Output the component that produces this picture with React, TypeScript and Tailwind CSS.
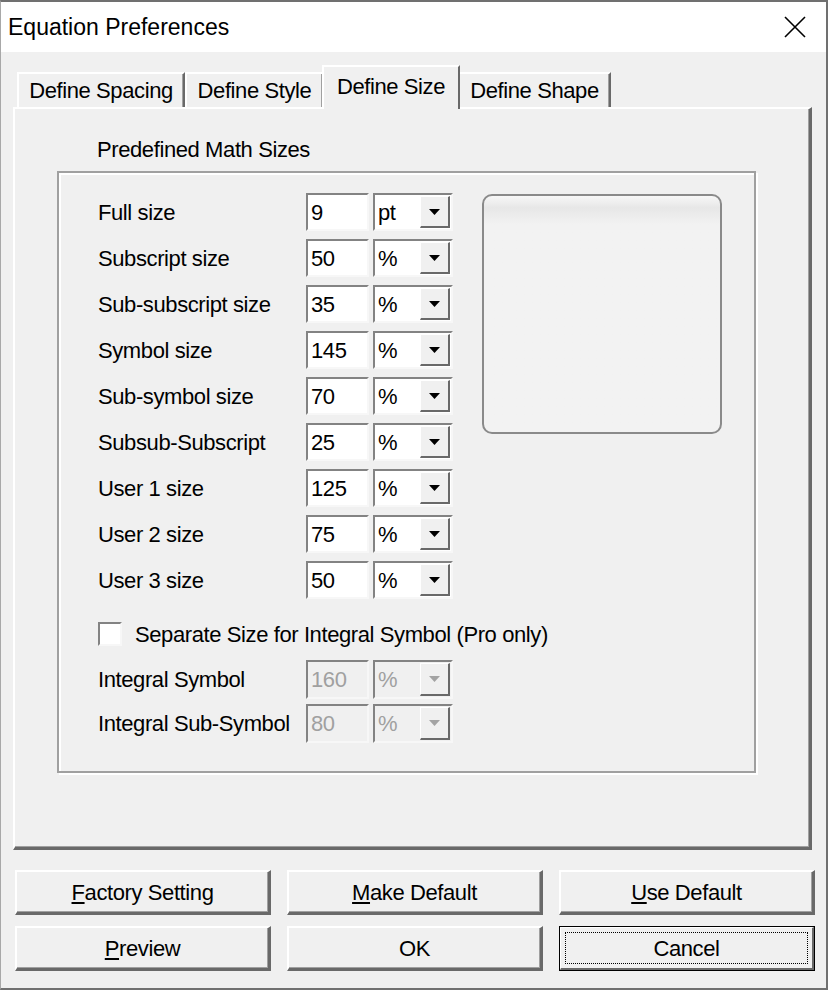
import React from 'react';

const FONT = "font-['Liberation_Sans',Arial,sans-serif]";
const SUNKEN = 'border-2 border-t-[#838383] border-l-[#838383] border-b-[#f7f7f7] border-r-[#f7f7f7]';

const sizes = [
  { label: 'Full size', value: '9', unit: 'pt' },
  { label: 'Subscript size', value: '50', unit: '%' },
  { label: 'Sub-subscript size', value: '35', unit: '%' },
  { label: 'Symbol size', value: '145', unit: '%' },
  { label: 'Sub-symbol size', value: '70', unit: '%' },
  { label: 'Subsub-Subscript', value: '25', unit: '%' },
  { label: 'User 1 size', value: '125', unit: '%' },
  { label: 'User 2 size', value: '75', unit: '%' },
  { label: 'User 3 size', value: '50', unit: '%' },
];

function Arrow({ disabled }: { disabled?: boolean }) {
  return (
    <svg width="11" height="6" viewBox="0 0 11 6">
      <path d="M0 0h11L5.5 6z" fill={disabled ? '#a3a3a3' : '#000'} />
    </svg>
  );
}

function SizeRow({ label, value, unit, disabled, tall }: { label: string; value: string; unit: string; disabled?: boolean; tall?: boolean }) {
  const fill = disabled ? 'bg-[#f0f0f0] text-[#a0a0a0]' : 'bg-white text-black';
  return (
    <div className={`flex items-center ${tall ? 'h-[39px]' : 'h-[38px]'}`}>
      <span className="w-[208px] shrink-0 whitespace-nowrap">{label}</span>
      <div className={`flex h-full w-[63px] shrink-0 items-center pl-[3px] ${SUNKEN} ${fill}`}>{value}</div>
      <div className={`ml-[4px] flex h-full w-[80px] shrink-0 ${SUNKEN} ${fill}`}>
        <span className="flex flex-1 items-center pl-[3px]">{unit}</span>
        <div className="my-[1px] mr-[1px] flex w-[30px] shrink-0 items-center justify-center border-t border-l border-t-white border-l-white border-b-2 border-r-2 border-b-[#696969] border-r-[#696969] bg-[#f0f0f0]">
          <Arrow disabled={disabled} />
        </div>
      </div>
    </div>
  );
}

function Tab({ label, width, selected }: { label: string; width: string; selected?: boolean }) {
  if (selected) {
    return (
      <div className={`relative z-10 -mx-[2px] -mb-[2px] flex h-[44px] items-center justify-center whitespace-nowrap pb-[4px] ${width} border-t-2 border-l-2 border-r-2 border-t-white border-l-white border-r-[#696969] bg-[#f0f0f0]`}>
        {label}
      </div>
    );
  }
  return (
    <div className={`flex h-[35px] items-center justify-center whitespace-nowrap ${width} border-t-2 border-l-2 border-r-2 border-t-white border-l-white border-r-[#696969] bg-[#f0f0f0] shadow-[inset_-1px_0_0_#a0a0a0]`}>
      {label}
    </div>
  );
}

function Button({ children, isDefault }: { children: React.ReactNode; isDefault?: boolean }) {
  if (isDefault) {
    return (
      <div className="flex h-[45px] w-[256px] border border-black bg-[#f0f0f0]">
        <div className="flex flex-1 border-t border-l border-t-white border-l-white border-b-2 border-r-2 border-b-[#696969] border-r-[#696969] p-[4px]">
          <div className="flex flex-1 items-center justify-center border border-dotted border-black">{children}</div>
        </div>
      </div>
    );
  }
  return (
    <div className="flex h-[45px] w-[256px] items-center justify-center border-t-2 border-l-2 border-t-white border-l-white border-b-[3px] border-r-[3px] border-b-[#696969] border-r-[#696969] bg-[#f0f0f0] shadow-[inset_-1px_-1px_0_#a0a0a0]">
      {children}
    </div>
  );
}

export default function App() {
  return (
    <div className={`flex h-[990px] w-[828px] flex-col border-t-2 border-r-2 border-b-2 border-l border-[#707070] border-l-[#a8a8a8] bg-[#f0f0f0] text-[22px] tracking-[-0.4px] text-black ${FONT}`}>
      <div className="flex h-[50px] shrink-0 items-center justify-between bg-white pl-[7px] pr-[20px]">
        <span className="text-[23px] tracking-normal">Equation Preferences</span>
        <svg width="22" height="22" viewBox="0 0 22 22">
          <path d="M1 1L21 21M21 1L1 21" stroke="#000" strokeWidth="1.6" />
        </svg>
      </div>

      <div className="flex flex-col pl-[12px] pt-[13px]">
        <div className="flex h-[42px] items-end pl-[4px]">
          <Tab label="Define Spacing" width="w-[168px]" />
          <Tab label="Define Style" width="w-[139px]" />
          <Tab label="Define Size" width="w-[138px]" selected />
          <Tab label="Define Shape" width="w-[153px]" />
        </div>

        <div className="h-[743px] w-[799px] border-t-2 border-l-2 border-t-white border-l-white border-b-[3px] border-r-[3px] border-b-[#696969] border-r-[#696969] shadow-[inset_-1px_-1px_0_#a0a0a0] pl-[42px]">
          <div className="mt-[26px] h-[30px] pl-[40px] leading-[30px]">Predefined Math Sizes</div>
          <div className="mt-[6px] w-[699px] border-2 border-[#a0a0a0] pb-[28px] pl-[39px] pt-[20px] shadow-[inset_2px_2px_0_#fff,2px_2px_0_#fff]">
            <div className="flex">
              <div className="flex flex-col gap-[8px]">
                {sizes.map(s => (
                  <SizeRow key={s.label} {...s} />
                ))}
              </div>
              <div className="ml-[29px] mt-[1px] h-[240px] w-[240px] rounded-[10px] border-2 border-[#8a8a8a] bg-linear-to-b from-[#f7f7f7] from-0% via-[#e7e7e7] via-5% to-[#f2f2f2] to-12%" />
            </div>
            <div className="mt-[23px] flex h-[24px] items-center">
              <div className={`h-[24px] w-[24px] bg-white ${SUNKEN}`} />
              <span className="ml-[13px]">Separate Size for Integral Symbol (Pro only)</span>
            </div>
            <div className="mt-[14px]">
              <SizeRow label="Integral Symbol" value="160" unit="%" disabled tall />
            </div>
            <div className="mt-[5px]">
              <SizeRow label="Integral Sub-Symbol" value="80" unit="%" disabled tall />
            </div>
          </div>
        </div>
      </div>

      <div className="mt-[20px] flex flex-col gap-[11px] pl-[14px]">
        <div className="flex gap-[16px]">
          <Button><span className="underline underline-offset-2">F</span>actory Setting</Button>
          <Button><span className="underline underline-offset-2">M</span>ake Default</Button>
          <Button><span className="underline underline-offset-2">U</span>se Default</Button>
        </div>
        <div className="flex gap-[16px]">
          <Button><span className="underline underline-offset-2">P</span>review</Button>
          <Button>OK</Button>
          <Button isDefault>Cancel</Button>
        </div>
      </div>
    </div>
  );
}
